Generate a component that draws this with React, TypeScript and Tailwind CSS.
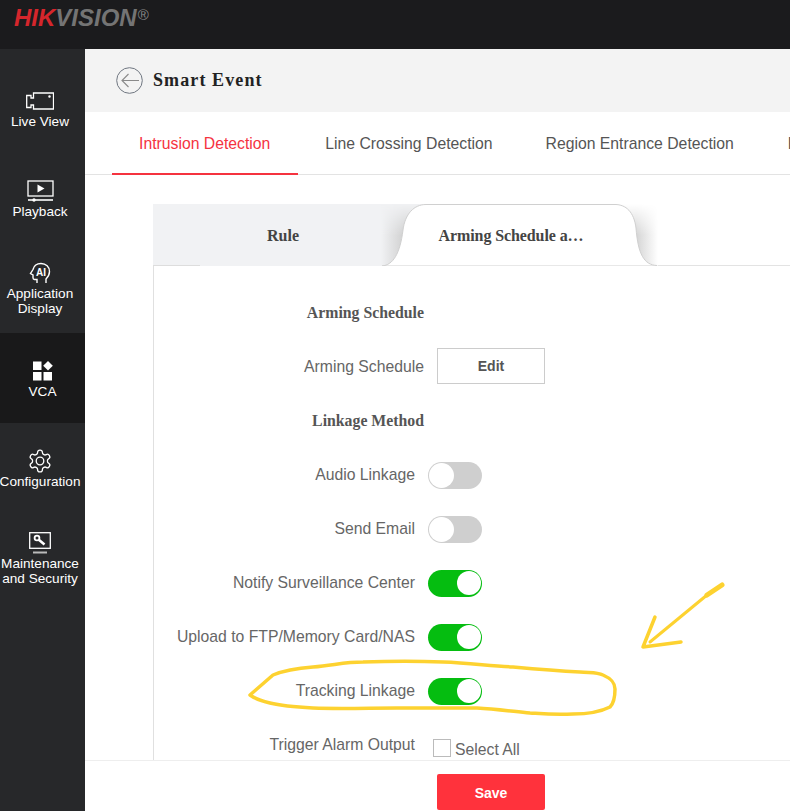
import type { ReactNode } from 'react';

const sans = 'font-["Liberation_Sans",Arial,sans-serif]';
const serif = 'font-["Liberation_Serif","Times_New_Roman",serif]';

function NavItem({ icon, label, active }: { icon: ReactNode; label: ReactNode; active?: boolean }) {
  const single = typeof label === 'string';
  return (
    <div className={`h-[90px] flex flex-col items-center justify-center gap-px text-white text-[13.6px] leading-[15px] text-center ${active ? 'bg-[#19191a]' : 'pr-[5px]'} ${single ? 'pt-[2px]' : ''}`}>
      <div className="w-[32px] h-[24px] flex items-center justify-center">{icon}</div>
      <div>{label}</div>
    </div>
  );
}

function Toggle({ on }: { on?: boolean }) {
  return (
    <div className={`w-[54px] h-[27px] rounded-full flex items-center px-[1px] ${on ? 'bg-[#05bd10] justify-end' : 'bg-[#cfcfcf] justify-start'}`}>
      <div className={`rounded-full bg-white ${on ? 'w-[24px] h-[24px]' : 'w-[25px] h-[25px]'}`} />
    </div>
  );
}

function ToggleRow({ label, on }: { label: string; on?: boolean }) {
  return (
    <div className="h-[54px] flex items-center">
      <div className="w-[261px] text-right text-[15.75px] text-[#666] whitespace-nowrap">{label}</div>
      <div className="ml-[13px]">
        <Toggle on={on} />
      </div>
    </div>
  );
}

function Heading({ children }: { children: ReactNode }) {
  return (
    <div className="h-[54px] flex items-center">
      <div className={`w-[270px] text-right text-[15.8px] font-bold text-[#555] ${serif}`}>{children}</div>
    </div>
  );
}

export default function App() {
  return (
    <div className={`relative w-[790px] h-[811px] overflow-hidden flex flex-col bg-white ${sans}`}>
      {/* Top bar */}
      <div className="h-[49px] shrink-0 bg-[#1b1b1d] pl-[14px] pt-[5px] flex items-start">
        <div className="italic font-bold text-[24px] leading-[26px]">
          <span className="text-[#d5262c]">HIK</span>
          <span className="text-[#747474]">VISION</span>
        </div>
        <span className="text-[#888] text-[15px] leading-[20px] ml-[1px]">®</span>
      </div>

      <div className="flex-1 flex min-h-0">
        {/* Sidebar */}
        <div className="w-[85px] shrink-0 bg-[#27282a] pt-[14px]">
          <NavItem
            label="Live View"
            icon={
              <svg width="28" height="18" viewBox="0 0 28 18" fill="none" stroke="#fff" strokeWidth="1.3">
                <path d="M7.5 1H27.500V17H7.500V13H5V15.500H.7V3.500H5V6H7.500Z" />
                <circle cx="23.500" cy="4.500" r="0.600" fill="#fff" />
              </svg>
            }
          />
          <NavItem
            label="Playback"
            icon={
              <svg width="27" height="22" viewBox="0 0 27 22" fill="none" stroke="#fff" strokeWidth="1.3">
                <rect x="1" y="1" width="25" height="15" />
                <path d="M10.500 4.500l7 4-7 4z" fill="#fff" stroke="none" />
                <path d="M1 20h25" strokeWidth="1.600" />
                <circle cx="7" cy="20" r="1.700" fill="#fff" stroke="none" />
              </svg>
            }
          />
          <NavItem
            label={
              <>
                Application
                <br />
                Display
              </>
            }
            icon={
              <svg width="22" height="22" viewBox="0 0 22 22" fill="none" stroke="#fff" strokeWidth="1.400">
                <path d="M8 21v-3.500H5.500c-1 0-1.500-.8-1.500-1.700V13L1.500 11.500 4 7.500C5 3.500 8 1.500 12 1.500c5 0 8.500 3.500 8.500 8 0 3.500-1.500 5.500-3.500 7.500v4" />
                <text x="12" y="13.800" textAnchor="middle" fontSize="10" fontWeight="700" fill="#fff" stroke="none" fontFamily="Liberation Sans">AI</text>
              </svg>
            }
          />
          <NavItem
            active
            label="VCA"
            icon={
              <svg width="20" height="20" viewBox="0 0 20 20" fill="#fff">
                <rect x="0" y="0.500" width="8.500" height="8.500" />
                <path d="M15 0l4.800 4.800L15 9.600l-4.800-4.800z" />
                <rect x="0" y="11" width="8.500" height="8.500" />
                <rect x="10.500" y="11" width="8.500" height="8.500" />
              </svg>
            }
          />
          <NavItem
            label="Configuration"
            icon={
              <svg width="26" height="26" viewBox="0 0 24 24" fill="none" stroke="#fff" strokeWidth="1.200" strokeLinejoin="round">
                <path d="M12.220 2h-.440a2 2 0 0 0-2 2v.180a2 2 0 0 1-1 1.730l-.430.250a2 2 0 0 1-2 0l-.150-.080a2 2 0 0 0-2.730.730l-.220.380a2 2 0 0 0 .730 2.730l.150.100a2 2 0 0 1 1 1.720v.510a2 2 0 0 1-1 1.740l-.150.090a2 2 0 0 0-.730 2.730l.220.380a2 2 0 0 0 2.730.730l.150-.080a2 2 0 0 1 2 0l.430.250a2 2 0 0 1 1 1.730V20a2 2 0 0 0 2 2h.440a2 2 0 0 0 2-2v-.180a2 2 0 0 1 1-1.730l.430-.250a2 2 0 0 1 2 0l.150.080a2 2 0 0 0 2.730-.730l.220-.390a2 2 0 0 0-.730-2.730l-.150-.080a2 2 0 0 1-1-1.740v-.500a2 2 0 0 1 1-1.740l.150-.090a2 2 0 0 0 .730-2.730l-.220-.380a2 2 0 0 0-2.730-.730l-.150.080a2 2 0 0 1-2 0l-.430-.250a2 2 0 0 1-1-1.730V4a2 2 0 0 0-2-2z" />
                <circle cx="12" cy="12" r="3.500" />
              </svg>
            }
          />
          <NavItem
            label={
              <>
                Maintenance
                <br />
                and Security
              </>
            }
            icon={
              <svg width="22" height="22" viewBox="0 0 22 22" fill="none" stroke="#fff" strokeWidth="1.300">
                <rect x=".7" y=".7" width="20.600" height="15.600" />
                <path d="M4 20.500h14" stroke="#bbb" strokeWidth="2" />
                <circle cx="8" cy="6" r="2.400" strokeWidth="1.800" />
                <path d="M9.800 7.800L15.500 12.500" strokeWidth="2.600" />
              </svg>
            }
          />
        </div>

        {/* Main */}
        <div className="flex-1 min-w-0 flex flex-col">
          <div className="h-[63px] shrink-0 bg-[#f3f3f3] flex items-center pl-[31px] gap-[10px]">
            <svg width="27" height="27" viewBox="0 0 27 27" fill="none">
              <circle cx="13.500" cy="13.500" r="12.800" stroke="#6f7680" strokeWidth="1" />
              <path d="M23 13.500H6M12.500 7l-6.500 6.500 6.500 6.500" stroke="#8a8a8a" strokeWidth="1.100" />
            </svg>
            <div className={`text-lg font-bold text-[#222] tracking-[1.1px] mb-[2px] ${serif}`}>Smart Event</div>
          </div>

          <div className="h-[63px] shrink-0 flex pl-[27px] shadow-[inset_0_-1px_0_#e3e3e3] whitespace-nowrap overflow-hidden text-[15.75px] text-[#555]">
            <div className="h-[63px] pl-[27px] pr-[28px] pt-[20px] text-[#f5333f] border-b-2 border-[#f5333f]">Intrusion Detection</div>
            <div className="pl-[27px] pr-[26px] pt-[20px]">Line Crossing Detection</div>
            <div className="px-[27px] pt-[20px]">Region Entrance Detection</div>
            <div className="px-[27px] pt-[20px]">Region Exiting Detection</div>
          </div>

          <div className="flex-1 min-h-0 overflow-hidden pl-[68px] pt-[29px]">
            <div className="flex h-[62px]">
              <div className={`relative w-[228px] shrink-0 bg-[#f1f2f4] flex items-center justify-center pl-[32px] pt-[2px] text-base font-bold text-[#444] ${serif}`}>
                Rule
                <div className="absolute left-0 bottom-0 w-[47px] h-px bg-[#ddd]" />
              </div>
              <div className={`relative w-[277px] shrink-0 flex items-center justify-center pr-[17px] pt-[2px] text-base font-bold text-[#444] tracking-[-0.1px] ${serif}`}>
                <svg className="absolute inset-0" width="277" height="62" viewBox="0 0 277 62" fill="none">
                  <defs>
                    <linearGradient id="flareL" gradientUnits="userSpaceOnUse" x1="0" x2="24" y1="0" y2="0">
                      <stop offset="0" stopColor="#f1f2f4" />
                      <stop offset="1" stopColor="#cfcfcf" />
                    </linearGradient>
                    <linearGradient id="flareR" gradientUnits="userSpaceOnUse" x1="255" x2="277" y1="0" y2="0">
                      <stop offset="0" stopColor="#d4d4d4" />
                      <stop offset="1" stopColor="#ffffff" />
                    </linearGradient>
                    <linearGradient id="fadeDown" x1="0" x2="0" y1="0" y2="1">
                      <stop offset="0" stopColor="#000" />
                      <stop offset="0.500" stopColor="#fff" />
                    </linearGradient>
                    <mask id="fadeMask" maskUnits="userSpaceOnUse" x="0" y="0" width="277" height="62">
                      <rect x="0" y="0" width="277" height="62" fill="url(#fadeDown)" />
                    </mask>
                  </defs>
                  <rect x="0" y="0" width="46" height="62" fill="#f1f2f4" />
                  <rect x="0" y="0" width="46" height="62" fill="url(#flareL)" mask="url(#fadeMask)" />
                  <rect x="240" y="0" width="37" height="61" fill="url(#flareR)" mask="url(#fadeMask)" />
                  <path d="M1 62C12 61 19 50 22 26C24 10 33 .5 45 .5H234C245 .5 253 8 255 24C257 50 263 61 276 61.500V62Z" fill="#fff" stroke="#d0d0d0" />
                </svg>
                <span className="relative">Arming Schedule a…</span>
              </div>
              <div className="flex-1 border-b border-[#e3e3e3]" />
            </div>

            <div className="border-l border-[#e0e0e0] pt-[20px] h-full">
              <Heading>Arming Schedule</Heading>
              <div className="h-[54px] flex items-center">
                <div className="w-[270px] text-right text-[15.75px] text-[#666]">Arming Schedule</div>
                <button className="ml-[13px] mb-[2px] w-[108px] h-[36px] border border-[#ccc] text-sm font-bold text-[#555]">Edit</button>
              </div>
              <Heading>Linkage Method</Heading>
              <ToggleRow label="Audio Linkage" />
              <ToggleRow label="Send Email" />
              <ToggleRow label="Notify Surveillance Center" on />
              <ToggleRow label="Upload to FTP/Memory Card/NAS" on />
              <ToggleRow label="Tracking Linkage" on />
              <div className="h-[54px] flex items-start pt-[17px]">
                <div className="w-[261px] text-right text-[15.75px] leading-[20px] text-[#666]">Trigger Alarm Output</div>
                <div className="ml-[18px] mt-[4px] w-[18px] h-[18px] border border-[#bbb]" />
                <div className="ml-[4px] mt-[5px] text-[15.75px] leading-[20px] text-[#666]">Select All</div>
              </div>
            </div>
          </div>

          <div className="h-[51px] shrink-0 bg-white border-t border-[#eee] pt-[13px] pl-[352px] relative">
            <button className="w-[108px] h-[36px] rounded-[2px] bg-[#ff323c] text-white text-sm font-bold pt-px">Save</button>
          </div>
        </div>
      </div>

      {/* Hand-drawn annotation */}
      <svg className="absolute inset-0 pointer-events-none" width="790" height="811" viewBox="0 0 790 811" fill="none" stroke="#fdd230" strokeLinecap="round" strokeLinejoin="round">
        <path
          strokeWidth="3.500"
          d="M250 695L273 675C285 670 300 668 313 667C335 665 345 662 363 662C390 661 420 661 443 662C470 663 490 666 513 667C535 669 560 671 580 672C590 673 597 672 603 675C612 679 615 683 615 689C615 698 613 704 610 707C600 712 587 714 573 714C555 715 545 714 530 713C510 711 495 709 477 708C450 708 425 708 397 708C370 708 340 709 313 708C295 707 282 706 270 703C262 701 254 698 250 695Z"
        />
        <path strokeWidth="3" d="M707 595L650 642" />
        <path strokeWidth="5" d="M707 595L722 585" />
        <path strokeWidth="3.500" d="M655 617L643 647L681 642" />
      </svg>
    </div>
  );
}
